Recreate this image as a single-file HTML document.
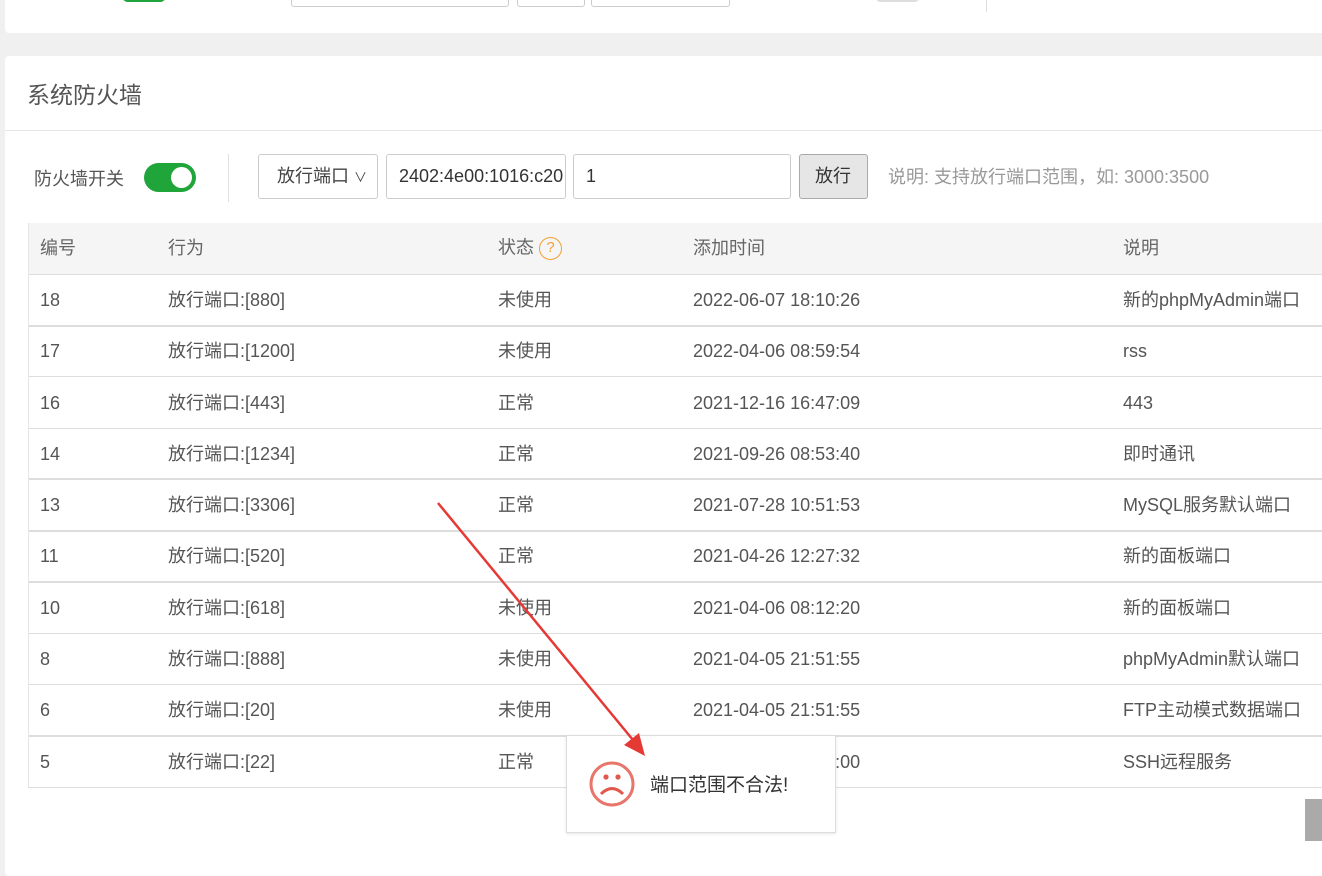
<!DOCTYPE html>
<html><head><meta charset="utf-8"><style>
*{margin:0;padding:0;box-sizing:border-box}
body{width:1322px;height:866px;background:#f0f0f0;position:relative;overflow:hidden;font-family:"Liberation Sans","Noto Sans CJK SC",sans-serif;color:#555;font-size:18px}
.abs{position:absolute}
.card1{left:5px;top:-10px;width:1330px;height:43px;background:#fff;border-radius:4px}
.card2{left:5px;top:56px;width:1330px;height:820px;background:#fff;border-radius:4px}
.inp{position:absolute;border:1px solid #ccc;border-radius:3px;background:#fff;height:45px;top:154px;line-height:43px;padding-left:12px;color:#333}
table{position:absolute;left:28px;top:223px;width:1300px;border-collapse:collapse;font-size:18px}
td,th{text-align:left;font-weight:normal;height:51.3px;padding:0;border-bottom:1px solid #ddd;line-height:20px;vertical-align:middle}
th{background:#f5f5f5;color:#666}
tr.thick td{border-bottom:2px solid #ddd}
</style></head><body>
<div class="abs card1"></div>
<div class="abs" style="left:122px;top:-10px;width:44px;height:12px;background:#20a53a;border-radius:8px"></div>
<div class="abs" style="left:291px;top:-10px;width:218px;height:17px;border:1px solid #ccc;border-radius:3px"></div>
<div class="abs" style="left:517px;top:-10px;width:68px;height:17px;border:1px solid #ccc;border-radius:3px"></div>
<div class="abs" style="left:591px;top:-10px;width:139px;height:17px;border:1px solid #ccc;border-radius:3px"></div>
<div class="abs" style="left:875px;top:-10px;width:45px;height:12px;background:#ddd;border-radius:8px"></div>
<div class="abs" style="left:986px;top:0;width:1px;height:12px;background:#ddd"></div>
<div class="abs card2"></div>
<div class="abs" style="left:27px;top:80px;font-size:23px;line-height:30px;color:#555">系统防火墙</div>
<div class="abs" style="left:5px;top:130px;width:1320px;height:1px;background:#e6e6e6"></div>
<div class="abs" style="left:34px;top:167px;line-height:24px;color:#555">防火墙开关</div>
<div class="abs" style="left:144px;top:163px;width:52px;height:29px;background:#20a53a;border-radius:15px"><div style="position:absolute;right:4px;top:4px;width:21px;height:21px;border-radius:50%;background:#fff"></div></div>
<div class="abs" style="left:228px;top:154px;width:1px;height:48px;background:#e0e0e0"></div>
<div class="inp" style="left:258px;width:120px;padding-left:18px;color:#444">放行端口 <span style="font-size:13px">&#8744;</span></div>
<div class="inp" style="left:386px;width:180px;overflow:hidden;white-space:nowrap;color:#333">2402:4e00:1016:c20</div>
<div class="inp" style="left:573px;width:218px">1</div>
<div class="inp" style="left:799px;width:69px;background:#e6e6e6;border-color:#aaa;padding-left:15px">放行</div>
<div class="abs" style="left:888px;top:165px;line-height:24px;color:#999">说明: 支持放行端口范围，如: 3000:3500</div>
<table>
<tr><th style="width:12px"></th><th style="width:128px">编号</th><th style="width:330px">行为</th><th style="width:195px">状态 <span style="display:inline-block;width:23px;height:23px;border:1.5px solid #f0a030;border-radius:50%;color:#f0a030;font-size:15px;text-align:center;line-height:20px;vertical-align:middle">?</span></th><th style="width:430px">添加时间</th><th>说明</th></tr>
<tr class="thick"><td></td><td>18</td><td>放行端口:[880]</td><td>未使用</td><td>2022-06-07 18:10:26</td><td>新的phpMyAdmin端口</td></tr>
<tr><td></td><td>17</td><td>放行端口:[1200]</td><td>未使用</td><td>2022-04-06 08:59:54</td><td>rss</td></tr>
<tr><td></td><td>16</td><td>放行端口:[443]</td><td>正常</td><td>2021-12-16 16:47:09</td><td>443</td></tr>
<tr class="thick"><td></td><td>14</td><td>放行端口:[1234]</td><td>正常</td><td>2021-09-26 08:53:40</td><td>即时通讯</td></tr>
<tr class="thick"><td></td><td>13</td><td>放行端口:[3306]</td><td>正常</td><td>2021-07-28 10:51:53</td><td>MySQL服务默认端口</td></tr>
<tr class="thick"><td></td><td>11</td><td>放行端口:[520]</td><td>正常</td><td>2021-04-26 12:27:32</td><td>新的面板端口</td></tr>
<tr><td></td><td>10</td><td>放行端口:[618]</td><td>未使用</td><td>2021-04-06 08:12:20</td><td>新的面板端口</td></tr>
<tr><td></td><td>8</td><td>放行端口:[888]</td><td>未使用</td><td>2021-04-05 21:51:55</td><td>phpMyAdmin默认端口</td></tr>
<tr class="thick"><td></td><td>6</td><td>放行端口:[20]</td><td>未使用</td><td>2021-04-05 21:51:55</td><td>FTP主动模式数据端口</td></tr>
<tr><td></td><td>5</td><td>放行端口:[22]</td><td>正常</td><td>2021-04-05 21:50:00</td><td>SSH远程服务</td></tr>
</table>
<div class="abs" style="left:28px;top:223px;width:1px;height:564px;background:#e6e6e6"></div>
<div class="abs" style="left:1305px;top:799px;width:17px;height:42px;background:#aaa"></div>
<div class="abs" style="left:566px;top:735px;width:270px;height:98px;background:#fff;border:1px solid #ddd;box-shadow:0 1px 3px rgba(0,0,0,.1)"></div>
<svg class="abs" style="left:588px;top:760px" width="48" height="48" viewBox="0 0 48 48"><circle cx="24" cy="24" r="21" fill="none" stroke="#e8766c" stroke-width="3"/><circle cx="18" cy="17" r="2.6" fill="#e2574c"/><circle cx="30" cy="17" r="2.6" fill="#e2574c"/><path d="M13 34 Q24 23 35 34" fill="none" stroke="#e2574c" stroke-width="3"/></svg>
<div class="abs" style="left:650px;top:774px;line-height:24px;color:#333;font-size:19px">端口范围不合法!</div>
<svg class="abs" style="left:0;top:0" width="1322" height="866"><line x1="438" y1="503" x2="633" y2="740" stroke="#e53935" stroke-width="2.5"/><polygon points="645,756 624,745 639,733" fill="#e53935"/></svg>
</body></html>
